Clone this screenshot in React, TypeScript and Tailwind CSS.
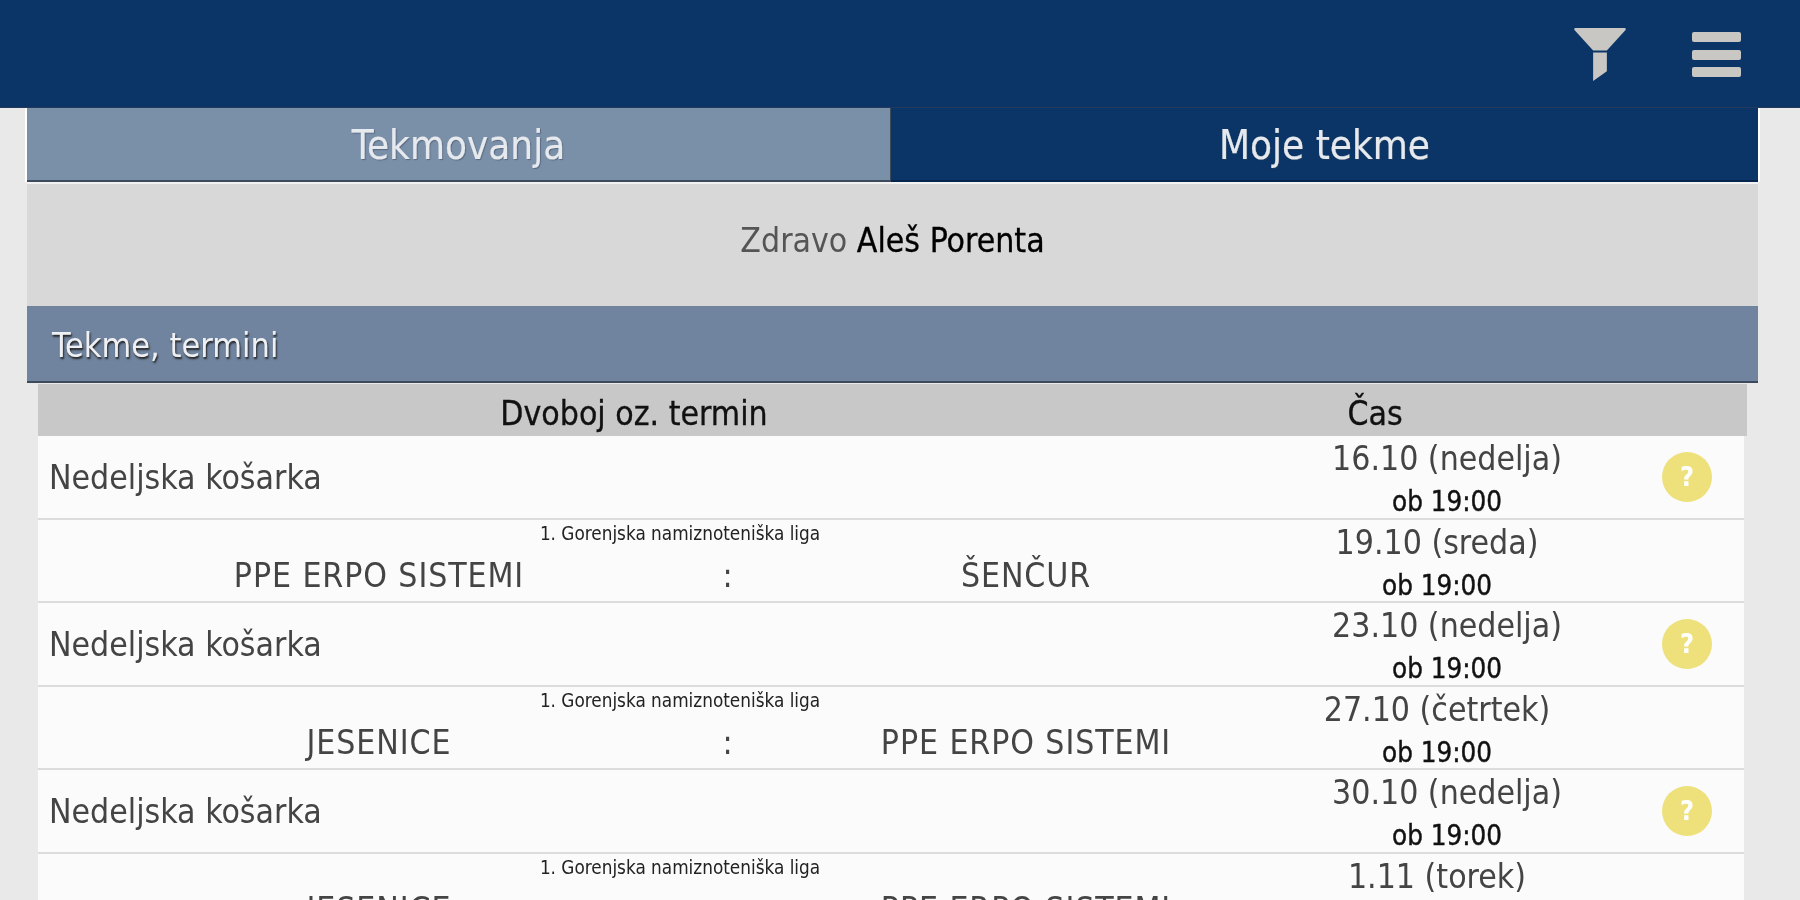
import React from 'react';

type Row =
  | { kind: 'free'; date: string }
  | { kind: 'match'; home: string; away: string; date: string };

const rows: Row[] = [
  { kind: 'free', date: '16.10 (nedelja)' },
  { kind: 'match', home: 'PPE ERPO SISTEMI', away: 'ŠENČUR', date: '19.10 (sreda)' },
  { kind: 'free', date: '23.10 (nedelja)' },
  { kind: 'match', home: 'JESENICE', away: 'PPE ERPO SISTEMI', date: '27.10 (četrtek)' },
  { kind: 'free', date: '30.10 (nedelja)' },
  { kind: 'match', home: 'JESENICE', away: 'PPE ERPO SISTEMI', date: '1.11 (torek)' },
];

const FunnelIcon = () => (
  <svg width="54" height="53" viewBox="0 0 54 54" className="text-[#c9c7c4]">
    <path d="M2 0h50q2 0 1 2L34 23H20L1 2q-1-2 1-2z" fill="currentColor" />
    <path d="M20 25h14v19l-14 10z" fill="currentColor" />
  </svg>
);

const DateCell = ({ date, className }: { date: string; className: string }) => (
  <div className={`flex flex-col items-center pt-[3px] text-center ${className}`}>
    <span className="text-[33.5px] leading-[40px] text-[#444]">{date}</span>
    <span className="mt-[5px] text-[27.5px] leading-[34px] text-[#111] [-webkit-text-stroke:0.4px_#111]">ob 19:00</span>
  </div>
);

const FreeRow = ({ date }: { date: string }) => (
  <div className="flex h-[83.5px] items-start bg-[#fbfbfb] border-b-2 border-[#dcdcdc]">
    <div className="w-[1262px] pl-[11px] pt-[22px] text-[33.5px] leading-[40px] text-[#444]">Nedeljska košarka</div>
    <DateCell date={date} className="w-[294px]" />
    <div className="flex flex-1 justify-center pl-[36px] pt-[16px]">
      <div className="flex h-[50px] w-[50px] items-center justify-center rounded-full bg-[#eee07a] text-[27px] font-bold text-white">?</div>
    </div>
  </div>
);

const MatchRow = ({ home, away, date }: { home: string; away: string; date: string }) => (
  <div className="flex h-[83.5px] items-start bg-[#fbfbfb] border-b-2 border-[#dcdcdc]">
    <div className="w-[1284px]">
      <div className="pt-[4px] text-center text-[18.8px] leading-[20px] text-[#222]">1. Gorenjska namiznoteniška liga</div>
      <div className="flex pt-[12px] text-[33.5px] leading-[40px] tracking-[0.9px] text-[#444]">
        <span className="w-[682px] text-center">{home}</span>
        <span className="w-[16px] text-center">:</span>
        <span className="w-[580px] text-center">{away}</span>
      </div>
    </div>
    <DateCell date={date} className="w-[230px]" />
  </div>
);

export default function App() {
  return (
    <div className="h-[900px] overflow-hidden bg-[#e9e9e9] font-['DejaVu_Sans_Condensed','DejaVu_Sans',sans-serif] blur-[0.7px]">
      <header className="flex h-[108px] items-start justify-end border-b border-[#24395a] bg-[#0a3566] pt-[28px]">
        <FunnelIcon />
        <div className="ml-[65px] mr-[59px] mt-[4px] flex w-[49px] flex-col gap-[7.5px]">
          <span className="h-[10px] rounded-[2px] bg-[#c9c7c4]" />
          <span className="h-[10px] rounded-[2px] bg-[#c9c7c4]" />
          <span className="h-[10px] rounded-[2px] bg-[#c9c7c4]" />
        </div>
      </header>

      <main className="mx-[27px] w-[1731px]">
        <div className="-mx-[2px] flex h-[74px] border-x-2 border-white text-[40px] [-webkit-text-stroke:0.2px_#e6e9ee] [text-shadow:1px_1px_1px_#33415580]">
          <div className="flex w-[864px] items-center justify-center border-b-2 border-r border-[#3c4a5c] bg-[#7a8fa8] pt-[2px] text-[#e6e9ee]">Tekmovanja</div>
          <div className="flex flex-1 items-center justify-center border-b-2 border-[#05254f] bg-[#0a3566] pt-[2px] text-[#e6e9ee]">Moje tekme</div>
        </div>
        <div className="flex h-[124px] items-center justify-center border-t-2 border-[#f2f2f2] bg-[#d8d8d8] pb-[7px] text-[33.5px] text-[#555]">
          <span>Zdravo <span className="text-black [-webkit-text-stroke:0.3px_#000]">Aleš Porenta</span></span>
        </div>
        <div className="flex h-[77px] items-center border-b-2 border-[#3c4a5c] bg-[#70849f] pl-[25px] pt-[3px] text-[34px] text-[#eef0f3] [text-shadow:1px_2px_2px_#222]">Tekme, termini</div>

        <div className="mx-[11px] mt-[1px] w-[1709px]">
          <div className="flex h-[52px] items-center bg-[#c8c8c8] pt-[8px] text-[33.5px] text-[#111] [-webkit-text-stroke:0.3px_#111]">
            <span className="w-[1192px] text-center">Dvoboj oz. termin</span>
            <span className="w-[290px] text-center">Čas</span>
          </div>
          <div className="mr-[3px]">
            {rows.map((r, i) =>
              r.kind === 'free' ? (
                <FreeRow key={i} date={r.date} />
              ) : (
                <MatchRow key={i} home={r.home} away={r.away} date={r.date} />
              )
            )}
          </div>
        </div>
      </main>
    </div>
  );
}
